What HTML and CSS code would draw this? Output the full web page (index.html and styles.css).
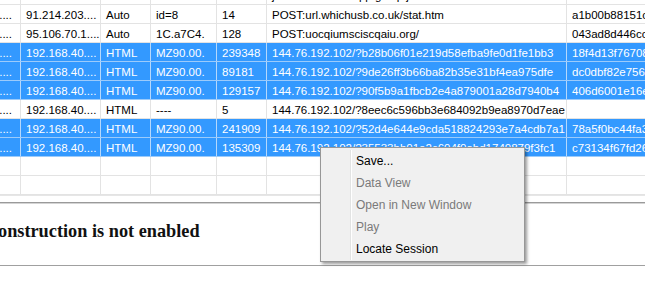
FILE: index.html
```html
<!DOCTYPE html>
<html>
<head>
<meta charset="utf-8">
<link rel="stylesheet" href="styles.css">
</head>
<body>
<div class="app">
  <div class="list">
    <div class="rows">
      <div class="row"><div class="c c1">....</div><div class="c c2">195.109.153....</div><div class="c c3">Auto</div><div class="c c4">false</div><div class="c c5">512</div><div class="c c6">j.maxmind.com/app/geoip.js</div><div class="c c7">6a0abe15c3d2e</div></div>
      <div class="row"><div class="c c1">....</div><div class="c c2">91.214.203....</div><div class="c c3">Auto</div><div class="c c4">id=8</div><div class="c c5">14</div><div class="c c6">POST:url.whichusb.co.uk/stat.htm</div><div class="c c7">a1b00b88151c6e2</div></div>
      <div class="row"><div class="c c1">....</div><div class="c c2">95.106.70.1....</div><div class="c c3">Auto</div><div class="c c4">1C.a7C4.</div><div class="c c5">128</div><div class="c c6">POST:uocqiumsciscqaiu.org/</div><div class="c c7">043ad8d446cc3a</div></div>
      <div class="row sel"><div class="c c1">....</div><div class="c c2">192.168.40....</div><div class="c c3">HTML</div><div class="c c4">MZ90.00.</div><div class="c c5">239348</div><div class="c c6">144.76.192.102/?b28b06f01e219d58efba9fe0d1fe1bb3</div><div class="c c7">18f4d13f76708a</div></div>
      <div class="row sel"><div class="c c1">....</div><div class="c c2">192.168.40....</div><div class="c c3">HTML</div><div class="c c4">MZ90.00.</div><div class="c c5">89181</div><div class="c c6">144.76.192.102/?9de26ff3b66ba82b35e31bf4ea975dfe</div><div class="c c7">dc0dbf82e756b1</div></div>
      <div class="row sel"><div class="c c1">....</div><div class="c c2">192.168.40....</div><div class="c c3">HTML</div><div class="c c4">MZ90.00.</div><div class="c c5">129157</div><div class="c c6">144.76.192.102/?90f5b9a1fbcb2e4a879001a28d7940b4</div><div class="c c7">406d6001e16e2c</div></div>
      <div class="row"><div class="c c1">....</div><div class="c c2">192.168.40....</div><div class="c c3">HTML</div><div class="c c4">----</div><div class="c c5">5</div><div class="c c6">144.76.192.102/?8eec6c596bb3e684092b9ea8970d7eae</div><div class="c c7"></div></div>
      <div class="row sel"><div class="c c1">....</div><div class="c c2">192.168.40....</div><div class="c c3">HTML</div><div class="c c4">MZ90.00.</div><div class="c c5">241909</div><div class="c c6">144.76.192.102/?52d4e644e9cda518824293e7a4cdb7a1</div><div class="c c7">78a5f0bc44fa3e</div></div>
      <div class="row sel"><div class="c c1">....</div><div class="c c2">192.168.40....</div><div class="c c3">HTML</div><div class="c c4">MZ90.00.</div><div class="c c5">135309</div><div class="c c6">144.76.192.102/?35533bb01e2c694f0abd1749879f3fc1</div><div class="c c7">c73134f67fd26a</div></div>
      <div class="row"><div class="c c1"></div><div class="c c2"></div><div class="c c3"></div><div class="c c4"></div><div class="c c5"></div><div class="c c6"></div><div class="c c7"></div></div>
      <div class="row"><div class="c c1"></div><div class="c c2"></div><div class="c c3"></div><div class="c c4"></div><div class="c c5"></div><div class="c c6"></div><div class="c c7"></div></div>
    </div>
  </div>
  <div class="splitter"></div>
  <div class="panel">
    <h3 class="notice">onstruction is not enabled</h3>
  </div>
  <div class="menu">
    <div class="menu-items">
      <div class="item">Save...</div>
      <div class="item disabled">Data View</div>
      <div class="item disabled">Open in New Window</div>
      <div class="item disabled">Play</div>
      <div class="item">Locate Session</div>
    </div>
  </div>
</div>
</body>
</html>
```

FILE: styles.css
```css
html, body {
  margin: 0;
  padding: 0;
  background: #ffffff;
}

body {
  width: 645px;
  height: 291px;
  overflow: hidden;
  font-family: "Liberation Sans", Arial, sans-serif;
}

.app {
  position: relative;
  width: 645px;
  height: 291px;
  overflow: hidden;
}

.list {
  height: 195px;
  overflow: hidden;
  border-bottom: 1px solid #e6e6e6;
}

.rows {
  margin-top: -14px;
  margin-left: -50px;
  display: flex;
  flex-direction: column;
}

.row {
  display: flex;
  flex: none;
  height: 19px;
  box-sizing: border-box;
  border-bottom: 1px solid #e3e3e3;
  color: #000;
  font-size: 11.5px;
}

.c {
  flex: none;
  box-sizing: border-box;
  height: 18px;
  line-height: 16px;
  padding: 2px 0 0 5px;
  border-right: 1px solid #e3e3e3;
  white-space: nowrap;
  overflow: hidden;
}

.c1 { width: 71px; text-align: right; padding-left: 0; padding-right: 8px; }
.c2 { width: 80px; }
.c3 { width: 50px; }
.c4 { width: 66px; }
.c5 { width: 50px; }
.c6 { width: 300px; }
.c7 { width: 200px; border-right: none; }

.row.sel {
  background: #3399ff;
  color: #ffffff;
  border-bottom-color: #9ccbfb;
}

.row.sel .c {
  border-right-color: #b5d8fc;
}

.splitter {
  margin-top: 6px;
  height: 0;
  border-top: 1px solid #9a9a9a;
  border-bottom: 1px solid #d4d4d4;
}

.panel {
  height: 62px;
  box-sizing: border-box;
  border-bottom: 1px solid #a0a0a0;
  overflow: hidden;
}

.notice {
  margin: 16px 0 0 -2px;
  font-family: "Liberation Serif", "Times New Roman", serif;
  font-size: 18.3px;
  font-weight: bold;
  line-height: 22px;
  color: #111;
  white-space: nowrap;
}

.menu {
  position: absolute;
  left: 320px;
  top: 147px;
  width: 205px;
  box-sizing: border-box;
  background: #f0f0f0;
  border: 1px solid #979797;
  padding: 2px 2px 1px 2px;
  box-shadow: 2px 2px 3px rgba(0, 0, 0, 0.4);
  font-family: "Liberation Sans", Arial, sans-serif;
  font-size: 12px;
}

.menu-items {
  margin-left: 27px;
  border-left: 1px solid #e2e3e3;
  box-shadow: inset 1px 0 0 #ffffff;
}

.item {
  height: 22px;
  line-height: 22px;
  padding-left: 5px;
  color: #000;
}

.item.disabled {
  color: #7a7a7a;
}
```
